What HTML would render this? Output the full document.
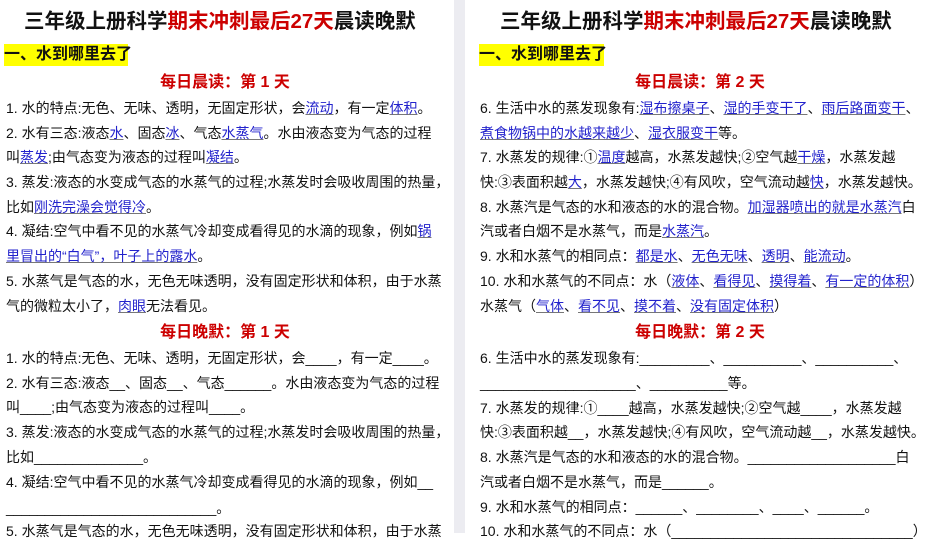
<!DOCTYPE html>
<html><head><meta charset="utf-8"><style>
body{margin:0;width:925px;height:533px;overflow:hidden;background:#fff;position:relative;font-family:"Liberation Sans","Noto Sans CJK SC",sans-serif;color:#111}
.strip{position:absolute;left:454px;top:0;width:11px;height:533px;background:#ececf1}
.t{position:absolute;font-weight:bold;font-size:20.5px;line-height:30px;white-space:nowrap;top:7px}
.r{color:#c00}
.y{position:absolute;top:44px;height:22px;background:#ff0;font-weight:bold;font-size:16px;line-height:22px;white-space:nowrap}
.h{position:absolute;color:#c00;font-size:16px;font-weight:bold;line-height:20px;white-space:nowrap;text-align:center;width:450px}
.l{position:absolute;font-size:14px;line-height:20px;white-space:nowrap}
.b{color:#22c;text-decoration:underline;text-decoration-color:#777}
</style></head><body>
<div class="strip"></div>
<div class="t" style="left:24px">三年级上册科学<span class="r">期末冲刺最后27天</span>晨读晚默</div>
<div class="t" style="left:500px">三年级上册科学<span class="r">期末冲刺最后27天</span>晨读晚默</div>
<div class="y" style="left:4px;width:124px">一、水到哪里去了</div>
<div class="y" style="left:479px;width:125px">一、水到哪里去了</div>
<div class="h" style="left:0;top:73px">每日晨读：第 1 天</div>
<div class="h" style="left:475px;top:73px">每日晨读：第 2 天</div>
<div class="h" style="left:0;top:323px">每日晚默：第 1 天</div>
<div class="h" style="left:475px;top:323px">每日晚默：第 2 天</div>

<div class="l" style="left:6px;top:98px">1. 水的特点:无色、无味、透明，无固定形状，会<span class="b">流动</span>，有一定<span class="b">体积</span>。</div>
<div class="l" style="left:6px;top:123px">2. 水有三态:液态<span class="b">水</span>、固态<span class="b">冰</span>、气态<span class="b">水蒸气</span>。水由液态变为气态的过程</div>
<div class="l" style="left:6px;top:147px">叫<span class="b">蒸发</span>;由气态变为液态的过程叫<span class="b">凝结</span>。</div>
<div class="l" style="left:6px;top:172px">3. 蒸发:液态的水变成气态的水蒸气的过程;水蒸发时会吸收周围的热量，</div>
<div class="l" style="left:6px;top:197px">比如<span class="b">刚洗完澡会觉得冷</span>。</div>
<div class="l" style="left:6px;top:221px">4. 凝结:空气中看不见的水蒸气冷却变成看得见的水滴的现象，例如<span class="b">锅</span></div>
<div class="l" style="left:6px;top:246px"><span class="b">里冒出的“白气”，叶子上的露水</span>。</div>
<div class="l" style="left:6px;top:271px">5. 水蒸气是气态的水，无色无味透明，没有固定形状和体积，由于水蒸</div>
<div class="l" style="left:6px;top:296px">气的微粒太小了，<span class="b">肉眼</span>无法看见。</div>
<div class="l" style="left:6px;top:348px">1. 水的特点:无色、无味、透明，无固定形状，会____，有一定____。</div>
<div class="l" style="left:6px;top:373px">2. 水有三态:液态__、固态__、气态______。水由液态变为气态的过程</div>
<div class="l" style="left:6px;top:397px">叫____;由气态变为液态的过程叫____。</div>
<div class="l" style="left:6px;top:422px">3. 蒸发:液态的水变成气态的水蒸气的过程;水蒸发时会吸收周围的热量，</div>
<div class="l" style="left:6px;top:447px">比如______________。</div>
<div class="l" style="left:6px;top:472px">4. 凝结:空气中看不见的水蒸气冷却变成看得见的水滴的现象，例如__</div>
<div class="l" style="left:6px;top:498px">___________________________。</div>
<div class="l" style="left:6px;top:521px">5. 水蒸气是气态的水，无色无味透明，没有固定形状和体积，由于水蒸</div>

<div class="l" style="left:480px;top:98px">6. 生活中水的蒸发现象有:<span class="b">湿布擦桌子</span>、<span class="b">湿的手变干了</span>、<span class="b">雨后路面变干</span>、</div>
<div class="l" style="left:480px;top:123px"><span class="b">煮食物锅中的水越来越少</span>、<span class="b">湿衣服变干</span>等。</div>
<div class="l" style="left:480px;top:147px">7. 水蒸发的规律:①<span class="b">温度</span>越高，水蒸发越快;②空气越<span class="b">干燥</span>，水蒸发越</div>
<div class="l" style="left:480px;top:172px">快:③表面积越<span class="b">大</span>，水蒸发越快;④有风吹，空气流动越<span class="b">快</span>，水蒸发越快。</div>
<div class="l" style="left:480px;top:197px">8. 水蒸汽是气态的水和液态的水的混合物。<span class="b">加湿器喷出的就是水蒸汽</span>白</div>
<div class="l" style="left:480px;top:221px">汽或者白烟不是水蒸气，而是<span class="b">水蒸汽</span>。</div>
<div class="l" style="left:480px;top:246px">9. 水和水蒸气的相同点：<span class="b">都是水</span>、<span class="b">无色无味</span>、<span class="b">透明</span>、<span class="b">能流动</span>。</div>
<div class="l" style="left:480px;top:271px">10. 水和水蒸气的不同点：水（<span class="b">液体</span>、<span class="b">看得见</span>、<span class="b">摸得着</span>、<span class="b">有一定的体积</span>）</div>
<div class="l" style="left:480px;top:296px">水蒸气（<span class="b">气体</span>、<span class="b">看不见</span>、<span class="b">摸不着</span>、<span class="b">没有固定体积</span>）</div>
<div class="l" style="left:480px;top:348px">6. 生活中水的蒸发现象有:_________、__________、__________、</div>
<div class="l" style="left:480px;top:373px">____________________、__________等。</div>
<div class="l" style="left:480px;top:398px">7. 水蒸发的规律:①____越高，水蒸发越快;②空气越____，水蒸发越</div>
<div class="l" style="left:480px;top:422px">快:③表面积越__，水蒸发越快;④有风吹，空气流动越__，水蒸发越快。</div>
<div class="l" style="left:480px;top:447px">8. 水蒸汽是气态的水和液态的水的混合物。___________________白</div>
<div class="l" style="left:480px;top:472px">汽或者白烟不是水蒸气，而是______。</div>
<div class="l" style="left:480px;top:497px">9. 水和水蒸气的相同点：______、________、____、______。</div>
<div class="l" style="left:480px;top:521px">10. 水和水蒸气的不同点：水（_______________________________）</div>
</body></html>
